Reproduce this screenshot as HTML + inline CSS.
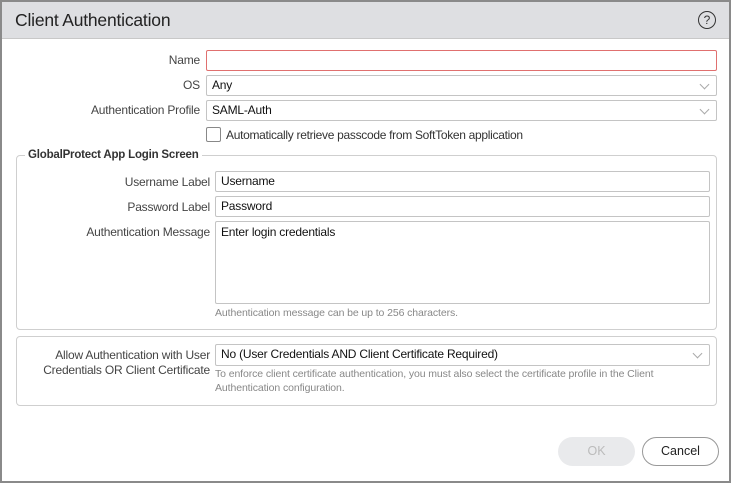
<!DOCTYPE html>
<html><head><style>
*{box-sizing:border-box;margin:0;padding:0}
body{width:731px;height:483px;background:#fff;font-family:"Liberation Sans",sans-serif;font-size:12px;color:#222;position:relative;overflow:hidden}
.frame{position:absolute;left:0;top:0;width:731px;height:483px;border:2px solid #8a8a8a}
.hdr{position:absolute;left:2px;top:2px;width:727px;height:37px;background:#dedfe2;border-bottom:1px solid #c8c8c8}
.title{position:absolute;left:15px;top:10px;font-size:17.5px;color:#222;letter-spacing:-0.2px}
.help{position:absolute;left:698px;top:11px;width:18px;height:18px;border:1.3px solid #333;border-radius:50%;font-size:12px;text-align:center;line-height:16px;color:#333}
.a{position:absolute}
.lbl{position:absolute;text-align:right;color:#444;font-size:12px;letter-spacing:-0.2px}
.inp{position:absolute;border:1px solid #c4c4c4;border-radius:2px;background:#fff;padding-left:5px;font-size:12px;color:#111;line-height:19px;letter-spacing:-0.2px}
.chev{position:absolute;right:8px;top:5px;width:7px;height:7px;border-right:1px solid #aaa;border-bottom:1px solid #aaa;transform:rotate(45deg)}
.box{position:absolute;border:1px solid #cfcfcf;border-radius:4px}
.hint{position:absolute;color:#888;font-size:10.5px;letter-spacing:-0.1px;line-height:14px}
.btn{position:absolute;border-radius:15px;text-align:center;line-height:29px;font-size:12.5px}
</style></head><body>
<div class="frame"></div>
<div class="hdr"></div>
<div class="title">Client Authentication</div>
<div class="help">?</div>

<div class="lbl" style="right:531px;top:53px">Name</div>
<div class="inp" style="left:206px;top:50px;width:511px;height:21px;border-color:#e0706f"></div>
<div class="lbl" style="right:531px;top:78px">OS</div>
<div class="inp" style="left:206px;top:75px;width:511px;height:21px">Any<span class="chev"></span></div>
<div class="lbl" style="right:531px;top:103px">Authentication Profile</div>
<div class="inp" style="left:206px;top:100px;width:511px;height:21px">SAML-Auth<span class="chev"></span></div>
<div class="a" style="left:206px;top:127px;width:15px;height:15px;border:1px solid #888;border-radius:2px"></div>
<div class="a" style="left:226px;top:128px;color:#333;letter-spacing:-0.3px">Automatically retrieve passcode from SoftToken application</div>

<div class="box" style="left:16px;top:155px;width:701px;height:175px"></div>
<div class="a" style="left:25px;top:149px;background:#fff;padding:0 3px;font-weight:bold;font-size:11.5px;color:#333;letter-spacing:-0.2px">GlobalProtect App Login Screen</div>
<div class="lbl" style="right:521px;top:175px">Username Label</div>
<div class="inp" style="left:215px;top:171px;width:495px;height:21px">Username</div>
<div class="lbl" style="right:521px;top:200px">Password Label</div>
<div class="inp" style="left:215px;top:196px;width:495px;height:21px">Password</div>
<div class="lbl" style="right:521px;top:225px">Authentication Message</div>
<div class="inp" style="left:215px;top:221px;width:495px;height:83px;padding-top:1px">Enter login credentials</div>
<div class="hint" style="left:215px;top:306px">Authentication message can be up to 256 characters.</div>

<div class="box" style="left:16px;top:336px;width:701px;height:70px"></div>
<div class="lbl" style="right:521px;top:348px;line-height:15px">Allow Authentication with User<br>Credentials OR Client Certificate</div>
<div class="inp" style="left:215px;top:344px;width:495px;height:22px">No (User Credentials AND Client Certificate Required)<span class="chev"></span></div>
<div class="hint" style="left:215px;top:367px">To enforce client certificate authentication, you must also select the certificate profile in the Client<br>Authentication configuration.</div>

<div class="btn" style="left:558px;top:437px;width:77px;height:29px;background:#e9eaec;color:#bbb">OK</div>
<div class="btn" style="left:642px;top:437px;width:77px;height:29px;border:1px solid #999;color:#222;line-height:27px">Cancel</div>
</body></html>
